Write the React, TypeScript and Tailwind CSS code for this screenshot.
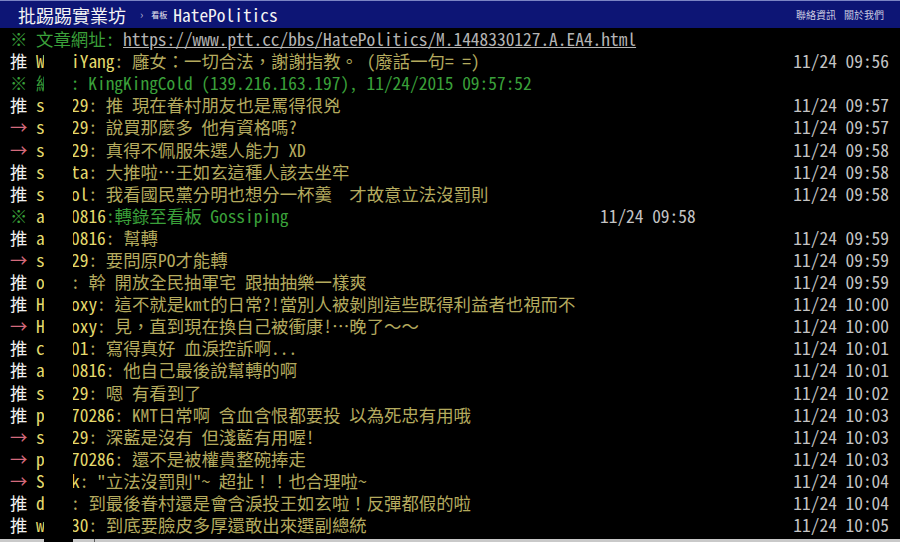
type Push = { tag: '推' | '→'; a: string; b: string; text: string; time: string }

const MONO = "font-['Noto_Sans_Mono_CJK_TC','Noto_Sans_CJK_TC',monospace]"

const PUSHES_1: Push[] = [
  { tag: '推', a: 's', b: '29', text: '推 現在眷村朋友也是罵得很兇', time: '11/24 09:57' },
  { tag: '→', a: 's', b: '29', text: '說買那麼多 他有資格嗎?', time: '11/24 09:57' },
  { tag: '→', a: 's', b: '29', text: '真得不佩服朱選人能力 XD', time: '11/24 09:58' },
  { tag: '推', a: 's', b: 'ta', text: '大推啦…王如玄這種人該去坐牢', time: '11/24 09:58' },
  { tag: '推', a: 's', b: 'ol', text: '我看國民黨分明也想分一杯羹  才故意立法沒罰則', time: '11/24 09:58' }
]

const PUSHES_2: Push[] = [
  { tag: '推', a: 'a', b: '0816', text: '幫轉', time: '11/24 09:59' },
  { tag: '→', a: 's', b: '29', text: '要問原PO才能轉', time: '11/24 09:59' },
  { tag: '推', a: 'o', b: '', text: '幹 開放全民抽軍宅 跟抽抽樂一樣爽', time: '11/24 09:59' },
  { tag: '推', a: 'H', b: 'oxy', text: '這不就是kmt的日常?!當別人被剝削這些既得利益者也視而不', time: '11/24 10:00' },
  { tag: '→', a: 'H', b: 'oxy', text: '見，直到現在換自己被衝康!…晚了～～', time: '11/24 10:00' },
  { tag: '推', a: 'c', b: '01', text: '寫得真好 血淚控訴啊...', time: '11/24 10:01' },
  { tag: '推', a: 'a', b: '0816', text: '他自己最後說幫轉的啊', time: '11/24 10:01' },
  { tag: '推', a: 's', b: '29', text: '嗯 有看到了', time: '11/24 10:02' },
  { tag: '推', a: 'p', b: '70286', text: 'KMT日常啊 含血含恨都要投 以為死忠有用哦', time: '11/24 10:03' },
  { tag: '→', a: 's', b: '29', text: '深藍是沒有 但淺藍有用喔!', time: '11/24 10:03' },
  { tag: '→', a: 'p', b: '70286', text: '還不是被權貴整碗捧走', time: '11/24 10:03' },
  { tag: '→', a: 'S', b: 'k', text: '"立法沒罰則"~ 超扯！！也合理啦~', time: '11/24 10:04' },
  { tag: '推', a: 'd', b: '', text: '到最後眷村還是會含淚投王如玄啦！反彈都假的啦', time: '11/24 10:04' },
  { tag: '推', a: 'w', b: '30', text: '到底要臉皮多厚還敢出來選副總統', time: '11/24 10:05' }
]

function PushRow({ p }: { p: Push }) {
  return (
    <div className="flex h-[22.1px] items-center whitespace-pre">
      <span className={`w-[26px] shrink-0 ${p.tag === '推' ? 'text-[#f0f0f0]' : 'text-[#d46a7c]'}`}>{p.tag}</span>
      <span className="w-[9px] shrink-0 text-[#e4da6c]">{p.a}</span>
      <span className="w-[26px] shrink-0" />
      <span className="text-[#e4da6c]">{p.b}</span>
      <span className="text-[#b4aa5e]">: {p.text}</span>
      <span className="ml-auto text-[#c4c4c4]">{p.time}</span>
    </div>
  )
}

export default function App() {
  return (
    <div className="relative flex h-[542px] w-full flex-col overflow-hidden bg-black">
      <header className="flex h-[28px] shrink-0 items-center border-t border-[#7b84c4] bg-[#0d1575] pl-[18px] pr-[16px]">
        <span className="font-['Noto_Sans_CJK_TC',sans-serif] text-[18px] leading-none text-[#f4f4f4]">批踢踢實業坊</span>
        <span className="ml-[14px] font-['Noto_Sans_CJK_TC',sans-serif] text-[11px] text-[#b8bcd8]">›</span>
        <span className="ml-[8px] font-['Noto_Sans_CJK_TC',sans-serif] text-[8px] text-[#e8e8f0]">看板</span>
        <span className={`ml-[6px] ${MONO} text-[17.4px] leading-none text-[#f4f4f4]`}>HatePolitics</span>
        <div className="ml-auto flex gap-[8px] font-['Noto_Sans_CJK_TC',sans-serif] text-[10px] text-[#c8cae0]">
          <span>聯絡資訊</span>
          <span>關於我們</span>
        </div>
      </header>

      <main className={`flex-1 pl-[10px] pr-[11px] ${MONO} text-[17.4px] leading-[22px]`}>
        <div className="flex h-[22.1px] items-center whitespace-pre">
          <span className="text-[#3aa03a]">※ 文章網址: </span>
          <span className="text-[#b4b4b4] underline">https://www.ptt.cc/bbs/HatePolitics/M.1448330127.A.EA4.html</span>
        </div>
        <PushRow p={{ tag: '推', a: 'W', b: 'iYang', text: '廱女：一切合法，謝謝指教。 (廢話一句= =)', time: '11/24 09:56' }} />
        <div className="flex h-[22.1px] items-center whitespace-pre text-[#3aa03a]">
          ※ 編輯: KingKingCold (139.216.163.197), 11/24/2015 09:57:52
        </div>
        {PUSHES_1.map((p, i) => (
          <PushRow key={i} p={p} />
        ))}
        <div className="flex h-[22.1px] items-center whitespace-pre">
          <span className="inline-block w-[590px]">
            <span className="text-[#3aa03a]">※ </span>
            <span className="inline-block w-[9px] text-[#e4da6c]">a</span>
            <span className="inline-block w-[26px]" />
            <span className="text-[#e4da6c]">0816</span>
            <span className="text-[#3aa03a]">:轉錄至看板 Gossiping</span>
          </span>
          <span className="text-[#c4c4c4]">11/24 09:58</span>
        </div>
        {PUSHES_2.map((p, i) => (
          <PushRow key={i} p={p} />
        ))}
      </main>

      <div className="flex h-[3px] shrink-0 bg-[#c9c9c9]">
        <div className="w-[94px]" />
        <div className="w-px bg-[#5a5a5a]" />
      </div>

      {/* censor block over the user ids */}
      <div className="absolute bottom-0 left-[44px] top-[48px] w-[29px] bg-black" />
    </div>
  )
}
